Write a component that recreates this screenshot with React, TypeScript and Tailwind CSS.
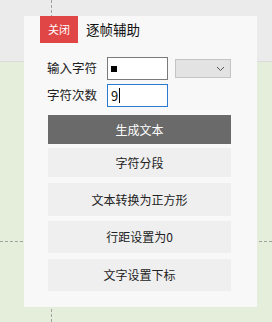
import React from "react";

const font = { fontFamily: '"Noto Sans CJK SC", "Noto Sans", sans-serif' };

function ActionButton({ label, dark, h }: { label: string; dark?: boolean; h: string }) {
  return (
    <button
      className={`w-[183px] ${h} flex items-center justify-center text-[12px] ${
        dark ? "bg-[#6a6a6a] text-white" : "bg-[#efefef] text-[#222]"
      }`}
    >
      {label}
    </button>
  );
}

export default function App() {
  return (
    <div className="relative w-[272px] h-[322px] overflow-hidden bg-[#e4eedb]" style={font}>
      {/* canvas background */}
      <div className="h-[62px] bg-[#ebebeb] border-b border-[#dcdcdc]" />
      <div className="absolute left-[51px] top-0 h-full border-l border-dashed border-[#a0a0a0]" />
      <div className="absolute left-0 top-[241px] w-full border-t border-dashed border-[#a0a0a0]" />

      {/* panel */}
      <div className="absolute left-[24px] top-[16px] w-[233px] h-[291px] bg-[#f8f8f8]">
        <div className="flex items-center h-[27px] pl-[16px]">
          <button className="w-[38px] h-[27px] bg-[#e04646] text-white text-[11px]">关闭</button>
          <span className="ml-[8px] text-[13.5px] text-[#111]">逐帧辅助</span>
        </div>

        <div className="flex flex-col gap-[4px] pl-[23px] mt-[14px]">
          <div className="flex items-center h-[23px]">
            <span className="w-[60px] text-[12.5px] text-[#222]">输入字符</span>
            <div className="w-[61px] h-[23px] border border-[#7a7a7a] bg-white flex items-center pl-[3px]">
              <span className="block w-[6px] h-[6px] bg-black" />
            </div>
            <div className="ml-[7px] w-[56px] h-[19px] border border-[#c4c4c4] bg-[#e3e3e3] flex items-center justify-end pr-[5px]">
              <svg width="9" height="6" viewBox="0 0 9 6" fill="none">
                <path d="M1 1l3.5 3.5L8 1" stroke="#555" strokeWidth="1" />
              </svg>
            </div>
          </div>
          <div className="flex items-center h-[23px]">
            <span className="w-[60px] text-[12.5px] text-[#222]">字符次数</span>
            <div className="w-[61px] h-[23px] border border-[#2a7ad2] bg-white flex items-center pl-[3px] text-[13px] text-[#111]">
              9<span className="ml-[1px] block w-px h-[15px] bg-black" />
            </div>
          </div>
        </div>

        <div className="flex flex-col pl-[24px] mt-[8px]">
          <ActionButton label="生成文本" dark h="h-[29px]" />
          <div className="h-[4px]" />
          <ActionButton label="字符分段" h="h-[29px]" />
          <div className="h-[6px]" />
          <ActionButton label="文本转换为正方形" h="h-[33px]" />
          <div className="h-[5px]" />
          <ActionButton label="行距设置为0" h="h-[32px]" />
          <div className="h-[6px]" />
          <ActionButton label="文字设置下标" h="h-[32px]" />
        </div>
      </div>
    </div>
  );
}
